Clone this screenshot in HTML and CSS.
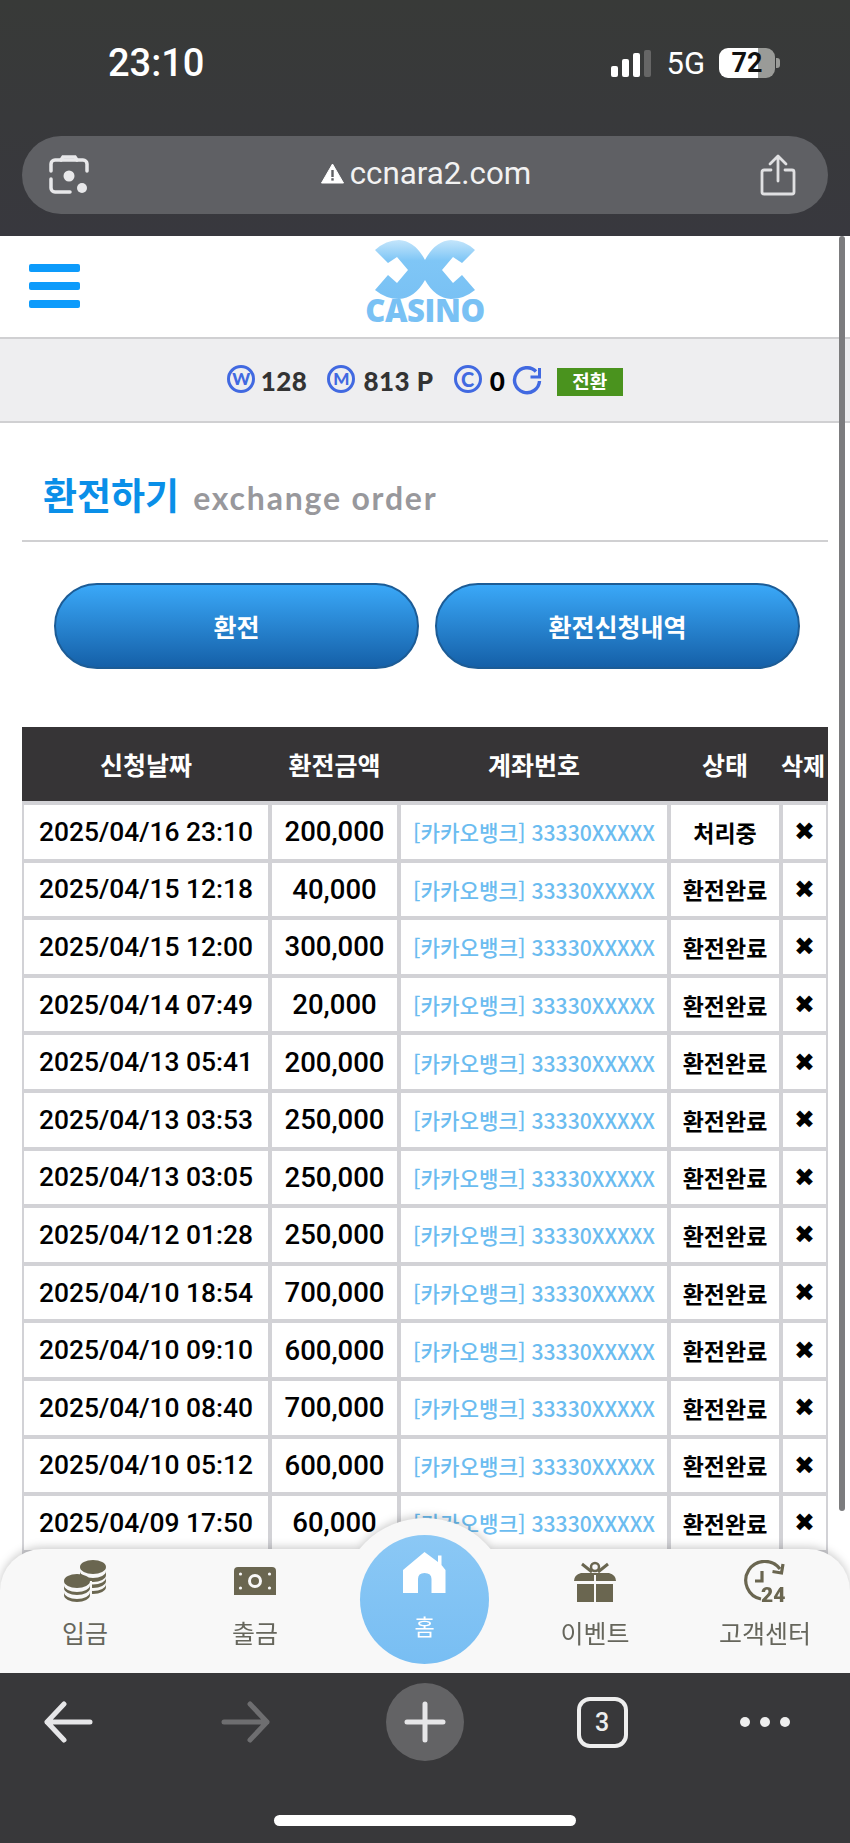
FILE: index.html
```html
<!DOCTYPE html>
<html lang="ko">
<head>
    <meta charset="UTF-8">
    <meta name="viewport" content="width=device-width, initial-scale=1.0">
    <title>환전하기</title>
    <link rel="stylesheet" href="styles.css">
</head>
<body>
    <div class="phone">
        <!-- Browser top -->
        <div class="browser-top">
            <div class="status-bar">
                <span class="time">23:10</span>
                <div class="status-right">
                    <div class="signal"><i class="b1"></i><i class="b2"></i><i class="b3"></i><i class="b4"></i></div>
                    <span class="net">5G</span>
                    <div class="battery"><span>72</span></div>
                    <i class="battery-nub"></i>
                </div>
            </div>
            <div class="address-bar">
                <svg class="addr-icon" width="42" height="42" viewBox="0 0 42 42" fill="none" stroke="#e8e8ea" stroke-width="3.5" stroke-linecap="round">
                    <path d="M3 17V10a4 4 0 0 1 4-4h28a4 4 0 0 1 4 4v7"/>
                    <path d="M13 6l2-3h12l2 3"/>
                    <path d="M3 25v9a4 4 0 0 0 4 4h15"/>
                    <circle cx="21" cy="22" r="5.5" fill="#e8e8ea" stroke="none"/>
                    <circle cx="34" cy="34" r="5" fill="#e8e8ea" stroke="none"/>
                </svg>
                <div class="addr-url">
                    <svg width="23" height="21" viewBox="0 0 23 21"><path d="M11.5 1L22.5 20H.5z" fill="#fff" stroke="#fff" stroke-linejoin="round"/><rect x="10.3" y="7" width="2.4" height="7" fill="#5f6064"/><rect x="10.3" y="15.2" width="2.4" height="2.4" fill="#5f6064"/></svg>
                    <span>ccnara2.com</span>
                </div>
                <svg class="addr-icon" width="36" height="42" viewBox="0 0 36 42" fill="none" stroke="#e0e0e2" stroke-width="2.8" stroke-linecap="round" stroke-linejoin="round">
                    <path d="M18 27V3M10 10l8-8 8 8"/>
                    <path d="M11 16H4a2 2 0 0 0-2 2v20a2 2 0 0 0 2 2h28a2 2 0 0 0 2-2V18a2 2 0 0 0-2-2h-7"/>
                </svg>
            </div>
        </div>

        <!-- Web page -->
        <div class="viewport">
            <header class="site-header">
                <div class="hamburger"><i></i><i></i><i></i></div>
                <div class="logo">
                    <svg width="100" height="59" viewBox="0 0 100 59">
                        <defs>
                            <linearGradient id="logoFill" x1="0" y1="0" x2="0" y2="1">
                                <stop offset="0" stop-color="#c4e5fb"/>
                                <stop offset="0.35" stop-color="#7fc6f6"/>
                                <stop offset="1" stop-color="#79c1f4"/>
                            </linearGradient>
                        </defs>
                        <path d="M0 10Q11 0 24 0Q40 1 50 20Q60 1 76 0Q89 0 100 10L87 23L78 17L67 30L78 43L87 35L100 50Q89 59 76 59Q60 58 50 40Q40 58 24 59Q11 59 0 50L13 35L22 43L33 30L22 17L13 23Z" fill="url(#logoFill)"/>
                    </svg>
                    <span class="logo-text">CASINO</span>
                </div>
            </header>

            <div class="points-bar">
                <span class="coin">W</span><span class="amount amount-first">128</span>
                <span class="coin">M</span><span class="amount">813 P</span>
                <span class="coin coin-c">C</span><span class="amount zero">0</span>
                <svg class="refresh" width="30" height="30" viewBox="0 0 30 30" fill="none" stroke="#4169e1" stroke-width="3.4">
                    <path d="M24 5.5A12.5 12.5 0 1 0 27.5 15"/>
                    <path d="M27.5 2v9h-9" stroke-width="3"/>
                </svg>
                <span class="swap-badge">전환</span>
            </div>

            <div class="page-title">
                <h2>환전하기</h2>
                <span>exchange order</span>
            </div>

            <div class="tab-buttons">
                <button type="button">환전</button>
                <button type="button">환전신청내역</button>
            </div>

            <div class="table-wrap">
                <table class="history">
                    <colgroup>
                        <col class="c-date"><col class="c-amount"><col class="c-account"><col class="c-state"><col class="c-del">
                    </colgroup>
                    <thead>
                        <tr><th>신청날짜</th><th>환전금액</th><th>계좌번호</th><th>상태</th><th class="del-head">삭제</th></tr>
                    </thead>
                    <tbody>
                        <tr><td>2025/04/16 23:10</td><td class="money">200,000</td><td class="account">[카카오뱅크] 33330XXXXX</td><td class="state">처리중</td><td class="del">✖</td></tr>
                        <tr><td>2025/04/15 12:18</td><td class="money">40,000</td><td class="account">[카카오뱅크] 33330XXXXX</td><td class="state">환전완료</td><td class="del">✖</td></tr>
                        <tr><td>2025/04/15 12:00</td><td class="money">300,000</td><td class="account">[카카오뱅크] 33330XXXXX</td><td class="state">환전완료</td><td class="del">✖</td></tr>
                        <tr><td>2025/04/14 07:49</td><td class="money">20,000</td><td class="account">[카카오뱅크] 33330XXXXX</td><td class="state">환전완료</td><td class="del">✖</td></tr>
                        <tr><td>2025/04/13 05:41</td><td class="money">200,000</td><td class="account">[카카오뱅크] 33330XXXXX</td><td class="state">환전완료</td><td class="del">✖</td></tr>
                        <tr><td>2025/04/13 03:53</td><td class="money">250,000</td><td class="account">[카카오뱅크] 33330XXXXX</td><td class="state">환전완료</td><td class="del">✖</td></tr>
                        <tr><td>2025/04/13 03:05</td><td class="money">250,000</td><td class="account">[카카오뱅크] 33330XXXXX</td><td class="state">환전완료</td><td class="del">✖</td></tr>
                        <tr><td>2025/04/12 01:28</td><td class="money">250,000</td><td class="account">[카카오뱅크] 33330XXXXX</td><td class="state">환전완료</td><td class="del">✖</td></tr>
                        <tr><td>2025/04/10 18:54</td><td class="money">700,000</td><td class="account">[카카오뱅크] 33330XXXXX</td><td class="state">환전완료</td><td class="del">✖</td></tr>
                        <tr><td>2025/04/10 09:10</td><td class="money">600,000</td><td class="account">[카카오뱅크] 33330XXXXX</td><td class="state">환전완료</td><td class="del">✖</td></tr>
                        <tr><td>2025/04/10 08:40</td><td class="money">700,000</td><td class="account">[카카오뱅크] 33330XXXXX</td><td class="state">환전완료</td><td class="del">✖</td></tr>
                        <tr><td>2025/04/10 05:12</td><td class="money">600,000</td><td class="account">[카카오뱅크] 33330XXXXX</td><td class="state">환전완료</td><td class="del">✖</td></tr>
                        <tr><td>2025/04/09 17:50</td><td class="money">60,000</td><td class="account">[카카오뱅크] 33330XXXXX</td><td class="state">환전완료</td><td class="del">✖</td></tr>
                        <tr><td></td><td></td><td></td><td></td><td></td></tr>
                    </tbody>
                </table>
            </div>

            <div class="scroll-thumb"></div>

            <!-- Fixed menu at the bottom of the site -->
            <nav class="tabbar">
                <a class="tab">
                    <span class="tab-icon">
                        <svg width="42" height="42" viewBox="0 0 42 42" fill="#6a6650">
                            <path d="M16 11A13 7 0 0 0 42 11V15A13 7 0 0 1 16 15ZM16 17.5A13 7 0 0 0 42 17.5V21A13 7 0 0 1 16 21ZM16 24A13 7 0 0 0 42 24V27A13 7 0 0 1 16 27Z"/>
                            <ellipse cx="29" cy="7" rx="13" ry="7"/>
                            <path d="M0 21h28v14a14 8 0 0 1-28 0z" fill="#f8f8f8"/>
                            <ellipse cx="13" cy="21" rx="13" ry="7"/>
                            <path d="M0 25A13 7 0 0 0 26 25V28A13 7 0 0 1 0 28ZM0 32A13 7 0 0 0 26 32V35A13 7 0 0 1 0 35Z"/>
                        </svg>
                    </span>
                    <span>입금</span>
                </a>
                <a class="tab">
                    <span class="tab-icon">
                        <svg width="42" height="28" viewBox="0 0 42 28">
                            <path d="M0 4a4 4 0 0 1 4-4h34a4 4 0 0 1 4 4v24H0z" fill="#6a6650"/>
                            <circle cx="21" cy="14" r="5.5" fill="none" stroke="#f8f8f8" stroke-width="3"/>
                            <circle cx="6.5" cy="7" r="1.6" fill="#f8f8f8"/><circle cx="35.5" cy="7" r="1.6" fill="#f8f8f8"/>
                            <circle cx="6.5" cy="21" r="1.6" fill="#f8f8f8"/><circle cx="35.5" cy="21" r="1.6" fill="#f8f8f8"/>
                        </svg>
                    </span>
                    <span>출금</span>
                </a>
                <a class="tab tab-home">
                    <span class="home-bubble">
                        <svg width="43" height="41" viewBox="0 0 43 41" fill="#fff">
                            <path d="M21.5 0L35 10V3.5H38.5V13L42.5 18V41H28.5V27Q28.5 21 21.5 21Q15 21 15 27V41H0V18Z"/>
                        </svg>
                        <span>홈</span>
                    </span>
                </a>
                <a class="tab">
                    <span class="tab-icon">
                        <svg width="42" height="41" viewBox="0 0 42 41" fill="#6a6650">
                            <circle cx="21" cy="6" r="4" fill="none" stroke="#6a6650" stroke-width="2.5"/>
                            <path d="M8 3L18 11M34 3L24 11" fill="none" stroke="#6a6650" stroke-width="3"/>
                            <path d="M0 20Q0 14 7 12H35Q42 14 42 20H22V14H20V20ZM3 23H20V41H3ZM22 23H39V41H22Z"/>
                        </svg>
                    </span>
                    <span>이벤트</span>
                </a>
                <a class="tab">
                    <span class="tab-icon">
                        <svg width="42" height="42" viewBox="0 0 42 42" fill="none" stroke="#6a6650" stroke-width="3.2">
                            <path d="M17 39A19 19 0 1 1 36 9"/>
                            <path d="M39 4l-1.5 9-9-1.5M18 11v10h-7"/>
                            <text x="17" y="42" class="clock-24">24</text>
                        </svg>
                    </span>
                    <span>고객센터</span>
                </a>
            </nav>
        </div>

        <!-- Browser bottom -->
        <div class="browser-bottom">
            <div class="toolbar">
                <svg width="50" height="42" viewBox="0 0 50 42" fill="none" stroke="#e6e6e8" stroke-width="5" stroke-linecap="round" stroke-linejoin="round"><path d="M47 21H4M21 3L4 21l17 18"/></svg>
                <svg width="50" height="42" viewBox="0 0 50 42" fill="none" stroke="#6e6e70" stroke-width="5" stroke-linecap="round" stroke-linejoin="round"><path d="M3 21h43M29 3l17 18-17 18"/></svg>
                <div class="new-tab"><svg width="42" height="42" viewBox="0 0 42 42" stroke="#e6e6e8" stroke-width="5" stroke-linecap="round"><path d="M21 3v36M3 21h36"/></svg></div>
                <div class="tab-count">3</div>
                <div class="more"><i></i><i></i><i></i></div>
            </div>
            <div class="home-indicator"></div>
        </div>
    </div>
</body>
</html>
```

FILE: styles.css
```css
/* Global styles */
* {
    box-sizing: border-box;
}

body {
    margin: 0;
    padding: 0;
    background-color: #fff;
    font-family: "Noto Sans CJK KR", "Noto Sans", sans-serif;
}

.phone {
    width: 850px;
    height: 1843px;
    display: flex;
    flex-direction: column;
    overflow: hidden;
}

/* Browser top */
.browser-top {
    height: 236px;
    flex: none;
    background: linear-gradient(#383a38, #38383e);
    color: #fff;
    padding: 0 22px;
}

.status-bar {
    height: 136px;
    display: flex;
    justify-content: space-between;
    padding: 41px 48px 0 86px;
}

.time {
    font-family: Roboto, sans-serif;
    font-size: 38px;
    font-weight: 500;
    line-height: 44px;
}

.status-right {
    display: flex;
    align-items: center;
    height: 44px;
}

.signal {
    display: flex;
    align-items: flex-end;
    gap: 4px;
    height: 27px;
    margin-right: 15px;
    margin-top: 1px;
}

.signal i {
    display: block;
    width: 7px;
    background-color: #fff;
    border-radius: 2px;
}

.signal .b1 { height: 11px; }
.signal .b2 { height: 18px; }
.signal .b3 { height: 24px; }
.signal .b4 { height: 27px; background-color: #666; }

.net {
    font-family: Roboto, sans-serif;
    font-size: 31px;
    margin-right: 14px;
}

.battery {
    width: 56px;
    height: 30px;
    border-radius: 9px;
    background: linear-gradient(90deg, #fff 70%, #9a9b98 70%);
    color: #111;
    font-family: Roboto, sans-serif;
    font-size: 27px;
    font-weight: 700;
    line-height: 30px;
    text-align: center;
}

.battery-nub {
    width: 4px;
    height: 10px;
    margin-left: 1px;
    background-color: #9a9b98;
    border-radius: 0 3px 3px 0;
}

.address-bar {
    height: 78px;
    border-radius: 39px;
    background-color: #5f6064;
    display: flex;
    align-items: center;
    justify-content: space-between;
    padding: 0 32px 0 26px;
}

.addr-url {
    display: flex;
    align-items: center;
    gap: 6px;
    margin-left: 2px;
    margin-top: -4px;
    font-family: Roboto, sans-serif;
    font-size: 31.3px;
    color: #f2f2f2;
}

/* Page */
.viewport {
    flex: 1;
    position: relative;
    overflow: hidden;
    background-color: #fff;
}

.scroll-thumb {
    position: absolute;
    top: 0;
    right: 5px;
    width: 6px;
    height: 1275px;
    background-color: #7c7c7e;
    border-radius: 3px;
}

.site-header {
    height: 103px;
    border-bottom: 2px solid #d0d0d2;
    display: flex;
    align-items: flex-start;
    justify-content: center;
    position: relative;
}

.hamburger {
    position: absolute;
    left: 29px;
    top: 28px;
    width: 51px;
    display: flex;
    flex-direction: column;
    gap: 10px;
}

.hamburger i {
    display: block;
    height: 8px;
    background-color: #0d9bfb;
    border-radius: 2px;
}

.logo {
    display: flex;
    flex-direction: column;
    align-items: center;
    padding-top: 4px;
}

.logo svg {
    display: block;
}

.logo-text {
    font-family: "Open Sans", sans-serif;
    font-size: 31px;
    font-weight: 800;
    line-height: 22px;
    letter-spacing: -0.4px;
    color: #79c1f4;
}

.points-bar {
    height: 84px;
    padding-top: 2px;
    background-color: #eeeef0;
    border-bottom: 2px solid #d0d0d2;
    display: flex;
    align-items: center;
    justify-content: center;
    font-family: Lato, sans-serif;
    font-weight: 900;
}

.coin {
    width: 28px;
    height: 28px;
    border: 3px solid #4169e1;
    border-radius: 50%;
    color: #4169e1;
    font-size: 17px;
    line-height: 22px;
    text-align: center;
    margin-top: -5px;
}

.coin-c {
    font-size: 20px;
}

.amount {
    font-size: 26px;
    color: #333;
    margin: 0 20px 0 8px;
    letter-spacing: 0.5px;
}

.amount-first {
    margin-left: 5.5px;
}

.amount.zero {
    color: #000;
    margin: 0 7px 0 8px;
}

.refresh {
    margin-right: 14.6px;
}

.swap-badge {
    width: 66px;
    height: 28px;
    margin-top: 2px;
    background-color: #4a931e;
    color: #fff;
    font-family: "Noto Sans CJK KR", sans-serif;
    font-size: 19px;
    font-weight: 700;
    line-height: 26px;
    text-align: center;
}

.page-title {
    margin: 0 22px;
    height: 119px;
    border-bottom: 2px solid #d0d0d2;
    display: flex;
    align-items: baseline;
    gap: 14px;
    padding: 46px 0 0 21px;
}

.page-title h2 {
    margin: 0;
    font-size: 37px;
    font-weight: 700;
    color: #0a8fe8;
    line-height: 50px;
}

.page-title span {
    font-family: Lato, sans-serif;
    font-size: 32px;
    font-weight: 700;
    color: #98989c;
    letter-spacing: 1.8px;
}

.tab-buttons {
    display: flex;
    gap: 16px;
    padding: 41px 50px 0 54px;
}

.tab-buttons button {
    flex: 1;
    height: 86px;
    border: 2px solid #1c5c96;
    border-radius: 43px;
    background: linear-gradient(#3aa8f8, #1560a8);
    color: #fff;
    font-family: inherit;
    font-size: 25px;
    font-weight: 700;
}

.table-wrap {
    width: 806px;
    margin: 58px 0 0 22px;
    overflow: hidden;
}

.history {
    width: 806px;
    margin-left: -2px;
    border-collapse: collapse;
    table-layout: fixed;
}

.c-date { width: 248px; }
.c-amount { width: 129px; }
.c-account { width: 270px; }
.c-state { width: 112px; }
.c-del { width: 47px; }

.history th {
    height: 76px;
    background-color: #363436;
    color: #fff;
    font-size: 25px;
    font-weight: 700;
    white-space: nowrap;
    overflow: hidden;
    padding: 0;
}

.history th.del-head {
    text-align: left;
    font-size: 24px;
}

.history td {
    height: 57.6px;
    padding: 0;
    border: 4px solid #d2d2d6;
    text-align: center;
    white-space: nowrap;
    font-family: Roboto, sans-serif;
    font-size: 26.4px;
    font-weight: 500;
    color: #000;
}

.history td.money {
    font-size: 27.5px;
}

.history td.account {
    font-family: "Noto Sans CJK KR", sans-serif;
    font-size: 21.2px;
    font-weight: 500;
    color: #6bbcf0;
}

.history td.state {
    font-family: "Noto Sans CJK KR", sans-serif;
    font-size: 23px;
    font-weight: 700;
}

.history td.del {
    font-family: "DejaVu Sans", sans-serif;
    font-size: 25px;
}

/* Bottom menu */
.tabbar {
    position: absolute;
    left: 0;
    right: 0;
    bottom: 0;
    height: 124px;
    background-color: #f8f8f8;
    border-radius: 42px 42px 0 0;
    filter: drop-shadow(0 -2px 4px rgba(0, 0, 0, 0.2));
    display: grid;
    grid-template-columns: repeat(5, 1fr);
    padding-top: 11px;
}

.tabbar::before {
    content: "";
    position: absolute;
    left: 340px;
    top: -31px;
    width: 170px;
    height: 170px;
    border-radius: 50%;
    background-color: #f8f8f8;
}

.tab {
    position: relative;
    display: flex;
    flex-direction: column;
    align-items: center;
    gap: 12px;
    font-size: 25px;
    line-height: 36px;
    color: #66665c;
}

.tab-icon {
    display: flex;
    align-items: center;
    justify-content: center;
    height: 42px;
}

.clock-24 {
    font-family: Roboto, sans-serif;
    font-size: 21px;
    font-weight: 900;
    fill: #6a6650;
    stroke: none;
}

.home-bubble {
    position: absolute;
    left: 20px;
    top: -25px;
    width: 129px;
    height: 129px;
    border-radius: 50%;
    background: linear-gradient(#8bc8f5, #78bef3);
    display: flex;
    flex-direction: column;
    align-items: center;
    gap: 14px;
    padding-top: 17px;
    color: #fff;
    font-size: 22px;
}

/* Browser bottom */
.browser-bottom {
    height: 170px;
    flex: none;
    background-color: #38383a;
    position: relative;
}

.toolbar {
    display: grid;
    grid-template-columns: 136px 220px 138px 216px 110px;
    justify-items: center;
    align-items: center;
    height: 98px;
}

.new-tab {
    width: 78px;
    height: 78px;
    border-radius: 50%;
    background-color: #636365;
    display: flex;
    align-items: center;
    justify-content: center;
}

.tab-count {
    width: 51px;
    height: 51px;
    border: 4px solid #eee;
    border-radius: 13px;
    color: #eee;
    font-family: Roboto, sans-serif;
    font-size: 25px;
    font-weight: 500;
    line-height: 43px;
    text-align: center;
}

.more {
    display: flex;
    gap: 10px;
}

.more i {
    display: block;
    width: 10px;
    height: 10px;
    border-radius: 50%;
    background-color: #eee;
}

.home-indicator {
    position: absolute;
    left: 274px;
    top: 142px;
    width: 302px;
    height: 11px;
    border-radius: 6px;
    background-color: #fff;
}
```
